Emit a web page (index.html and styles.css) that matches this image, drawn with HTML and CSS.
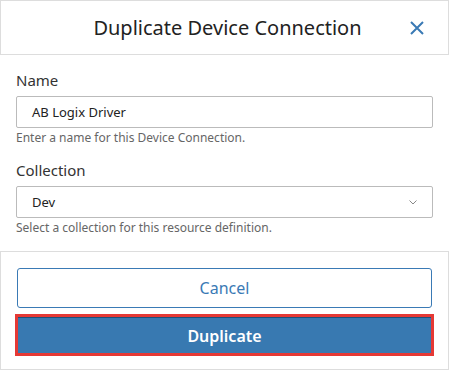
FILE: index.html
```html
<html>
<head>
<title>Duplicate Device Connection</title>
<link rel="stylesheet" href="styles.css">
</head>
<body>

<!-- ====================================================== -->
<div class="dialog">

<div class="dialog-head">
    <span></span>
    <h1 class="dialog-title">Duplicate Device Connection</h1>
    <span class="close">
        <svg width="16" height="16" viewBox="0 0 16 16">
            <path d="M2 2 L14 14 M14 2 L2 14" stroke="#3a7ab5" stroke-width="2" fill="none"/>
        </svg>
    </span>
</div>

<!-- ====================================================== -->
<div class="dialog-body">
    <div class="field">
        <div class="field-label">Name</div>
        <div class="field-box">AB Logix Driver</div>
        <div class="field-help">Enter a name for this Device Connection.</div>
    </div>

    <div class="field">
        <div class="field-label">Collection</div>
        <div class="field-box select">
            <span>Dev</span>
            <svg width="8" height="5" viewBox="0 0 8 5">
                <path d="M0.5 0.5 L4 4 L7.5 0.5" stroke="#888" stroke-width="1" fill="none"/>
            </svg>
        </div>
        <div class="field-help">Select a collection for this resource definition.</div>
    </div>
</div>

<!-- ====================================================== -->
<div class="dialog-foot">
    <div class="btn btn-cancel">Cancel</div>
    <div class="btn btn-primary">Duplicate</div>
</div>

</div>

</body>
</html>
```

FILE: styles.css
```css
/*-----------------------------------------------------------------*/
body {
    margin:             0;
    background:         #FFF;
    font-family:        "Noto Sans", "Open Sans", sans-serif;
    color:              #333;
}

/*-----------------------------------------------------------------*/
.dialog {
    width:              449px;
    height:             370px;
    display:            flex;
    flex-direction:     column;
}

/*-----------------------------------------------------------------*/
.dialog-head {
    height:             53px;
    border:             1px solid #DDD;
    display:            grid;
    grid-template-columns: 1fr auto 1fr;
    align-items:        center;
}

.dialog-title {
    margin:             0;
    font-size:          20px;
    font-weight:        normal;
    color:              #222;
    padding-left:       6px;
}

.close {
    justify-self:       end;
    margin-right:       23px;
    display:            flex;
}

/*-----------------------------------------------------------------*/
.dialog-body {
    padding:            15px 16px 15px 16px;
    display:            flex;
    flex-direction:     column;
    gap:                14px;
}

.field-label {
    font-size:          15px;
    line-height:        20px;
    color:              #333;
    margin-bottom:      6px;
}

.field-box {
    height:             30px;
    border:             1px solid #BBB;
    border-radius:      2px;
    padding:            0 15px;
    font-size:          13px;
    color:              #222;
    display:            flex;
    align-items:        center;
}

.select {
    justify-content:    space-between;
}

.field-help {
    margin-top:         2px;
    font-size:          12px;
    line-height:        16px;
    color:              #666;
}

/*-----------------------------------------------------------------*/
.dialog-foot {
    flex:               1;
    border:             1px solid #DDD;
    padding:            16px 16px 0 16px;
    display:            flex;
    flex-direction:     column;
    gap:                9px;
}

.btn {
    display:            flex;
    align-items:        center;
    justify-content:    center;
    font-size:          16px;
    border-radius:      3px;
}

.btn-cancel {
    height:             38px;
    border:             1px solid #3A7AB5;
    color:              #3A7AB5;
}

.btn-primary {
    height:             35px;
    margin:             0 1px;
    background:         #3879B1;
    border-top:         1px solid #1F4F7A;
    border-radius:      0;
    color:              #FFF;
    font-weight:        600;
    outline:            3px solid #E53935;
}
```
